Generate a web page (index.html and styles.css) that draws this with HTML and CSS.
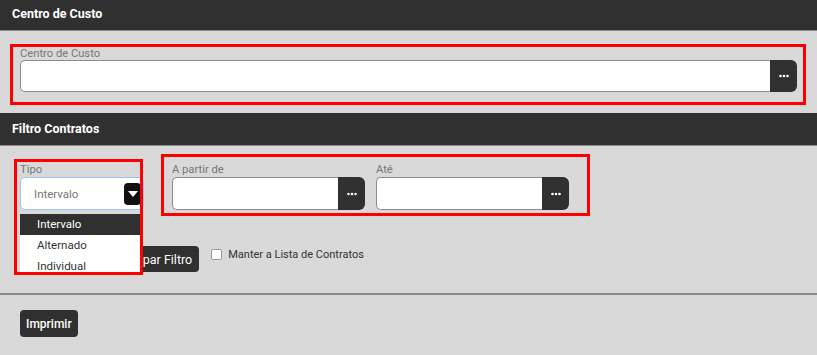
FILE: index.html
```html
<!DOCTYPE html>
<html lang="pt">
<head>
<meta charset="utf-8">
<title>Centro de Custo</title>
<link rel="stylesheet" href="styles.css">
</head>
<body>
  <div class="section-header h1">Centro de Custo</div>
  <div class="section-body s1">
    <div class="mark mark-cc">
      <label class="lbl">Centro de Custo</label>
      <div class="lookup">
        <div class="input"></div>
        <button class="dots"><svg width="10" height="4" viewBox="0 0 10 4"><circle cx="1.5" cy="2" r="1.3" fill="#fff"/><circle cx="5" cy="2" r="1.3" fill="#fff"/><circle cx="8.5" cy="2" r="1.3" fill="#fff"/></svg></button>
      </div>
    </div>
  </div>

  <div class="section-header h2">Filtro Contratos</div>
  <div class="section-body s2">
    <div class="row1">
      <div class="tipo">
        <label class="lbl">Tipo</label>
        <div class="select">
          <span class="sel-text">Intervalo</span>
          <span class="arrow"><svg width="10" height="6" viewBox="0 0 10 6"><path d="M0 0 L10 0 L5 6 Z" fill="#fff"/></svg></span>
        </div>
        <ul class="dropdown">
          <li class="active">Intervalo</li>
          <li>Alternado</li>
          <li>Individual</li>
        </ul>
        <div class="mark-overlay"></div>
      </div>
      <div class="mark mark-range">
        <div class="field">
          <label class="lbl">A partir de</label>
          <div class="lookup">
            <div class="input"></div>
            <button class="dots"><svg width="10" height="4" viewBox="0 0 10 4"><circle cx="1.5" cy="2" r="1.3" fill="#fff"/><circle cx="5" cy="2" r="1.3" fill="#fff"/><circle cx="8.5" cy="2" r="1.3" fill="#fff"/></svg></button>
          </div>
        </div>
        <div class="field">
          <label class="lbl">Até</label>
          <div class="lookup">
            <div class="input"></div>
            <button class="dots"><svg width="10" height="4" viewBox="0 0 10 4"><circle cx="1.5" cy="2" r="1.3" fill="#fff"/><circle cx="5" cy="2" r="1.3" fill="#fff"/><circle cx="8.5" cy="2" r="1.3" fill="#fff"/></svg></button>
          </div>
        </div>
      </div>
    </div>
    <div class="row2">
      <button class="btn btn-limpar">Limpar Filtro</button>
      <label class="check"><span class="box"></span>Manter a Lista de Contratos</label>
    </div>
  </div>

  <div class="footer">
    <button class="btn btn-print">Imprimir</button>
  </div>
</body>
</html>
```
FILE: styles.css
```css
* { box-sizing: border-box; }
html, body { margin: 0; padding: 0; }
body {
  background: #d9d9d9;
  font-family: Roboto, "Liberation Sans", sans-serif;
  width: 817px;
  height: 355px;
  overflow: hidden;
}
.section-header {
  background: #303030;
  color: #fff;
  font-weight: bold;
  font-size: 12.5px;
  padding-left: 12px;
  border-bottom: 1px solid #8a8a8a;
}
.h1 { height: 31px; line-height: 28px; }
.h2 { height: 33px; line-height: 32px; }
.s1 { padding: 13px 11px 8px 10px; }
.mark {
  border: 3px solid #ff0000;
}
.mark-cc { padding: 0 6px 10px 7px; }
.lbl {
  display: block;
  color: #777;
  font-size: 11.2px;
  line-height: 13px;
  height: 13px;
}
.lookup {
  display: flex;
  height: 32px;
}
.input {
  flex: 1;
  background: #fff;
  border: 1px solid #8c8c8c;
  border-right: none;
  border-radius: 5px 0 0 5px;
}
.dots {
  width: 27px;
  border: none;
  background: #303030;
  border-radius: 0 6px 6px 0;
  display: flex;
  align-items: center;
  justify-content: center;
  padding: 0;
}
.s2 { padding: 8px 0 0 20px; }
.row1 { display: flex; align-items: flex-start; gap: 11px; }
.tipo {
  position: relative;
  width: 130px;
  margin-top: 9px;
}
.select {
  width: 124px;
  height: 33px;
  background: #fff;
  border: 1px solid #9cc4f2;
  border-radius: 5px;
  display: flex;
  align-items: center;
  justify-content: space-between;
  padding: 0 2px 0 13px;
  margin-top: 1px;
}
.sel-text { color: #777; font-size: 11.5px; }
.arrow {
  width: 17px;
  height: 22px;
  background: #111;
  border-radius: 4px;
  display: flex;
  align-items: center;
  justify-content: center;
  padding-left: 1px;
}
.dropdown {
  position: absolute;
  left: 0;
  top: 51px;
  width: 122px;
  height: 59px;
  overflow: hidden;
  margin: 0;
  padding: 0;
  list-style: none;
  background: #fff;
  font-size: 11.5px;
  color: #333;
  z-index: 2;
}
.dropdown li {
  height: 21px;
  line-height: 21px;
  padding-left: 17px;
}
.dropdown li.active { background: #303030; color: #fff; }
.mark-overlay {
  position: absolute;
  left: -6px;
  top: -4px;
  width: 129px;
  height: 116px;
  border: 3px solid #ff0000;
  z-index: 3;
}
.mark-range {
  display: flex;
  gap: 11px;
  padding: 6px 18px 3px 8px;
}
.field { width: 193px; }
.field .lookup { height: 33px; margin-top: 1px; }
.row2 {
  display: flex;
  align-items: flex-start;
  margin-top: 30px;
  height: 26px;
}
.btn {
  background: #303030;
  color: #fff;
  border: none;
  border-radius: 4px;
  font-family: Roboto, "Liberation Sans", sans-serif;
  font-size: 12px;
  padding: 0 7px;
  height: 26px;
}
.btn-limpar { margin-left: 95px; font-size: 12.5px; }
.check {
  display: flex;
  align-items: center;
  font-size: 11px;
  color: #333;
  margin-left: 12px;
  margin-top: 1px;
  height: 14px;
}
.box {
  width: 11px;
  height: 11px;
  background: #fff;
  border: 1px solid #999;
  border-radius: 2px;
  margin-right: 6px;
}
.footer {
  margin-top: 21px;
  border-top: 2px solid #8a8a8a;
  padding: 15px 0 0 20px;
}
.btn-print { height: 27px; font-weight: 500; padding: 0 6px; }
```
